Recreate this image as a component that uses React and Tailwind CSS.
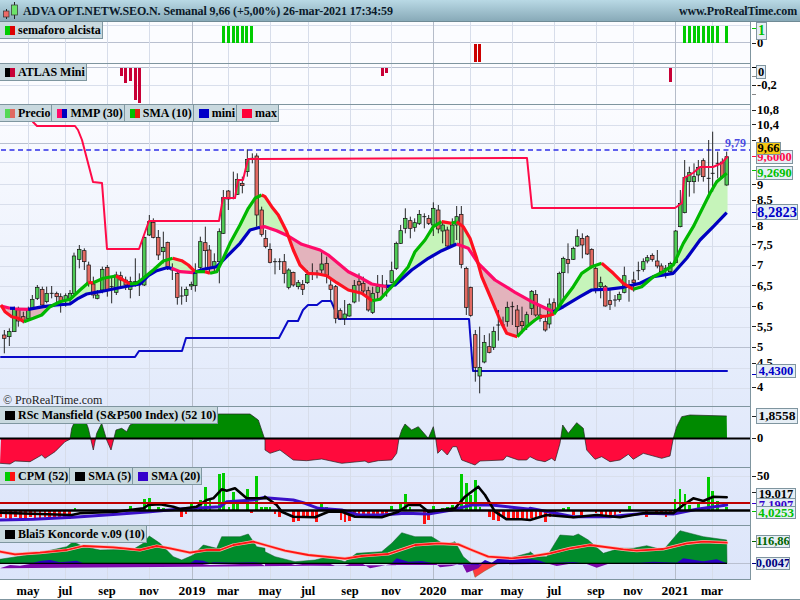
import React from "react";

const z = (ox, oy, pts) => pts.map(([x, y]) => [ox + x / 3, oy + y / 3]);
const str = (pts) => pts.map((p) => p[0].toFixed(1) + "," + p[1].toFixed(1)).join(" ");

const V = [28, 65, 107, 149, 192, 228, 270, 308, 350, 391, 433, 470, 512, 554, 596, 633, 675, 712];
const VD = [192, 433, 675];

const c3 = [[13,615,625,600,670,'r'],[28,604,620,595,648,'g'],[43,537,605,530,605,'g'],[55,535,573,530,590,'r'],[70,560,575,545,580,'r'],[85,540,565,530,570,'g'],[97,508,535,495,540,'g'],[112,472,505,465,510,'g'],[127,478,525,470,530,'r'],[140,490,515,470,520,'g'],[155,490,491,468,505,'g'],[170,490,500,485,520,'r'],[182,500,515,490,548,'r'],[197,497,510,490,530,'g'],[210,490,505,480,520,'g'],[222,378,490,368,495,'g'],[238,358,388,345,415,'g'],[253,362,395,355,420,'r'],[266,405,460,395,470,'r'],[280,462,495,440,505,'r'],[292,495,505,480,508,'g'],[307,418,480,410,490,'g'],[322,412,480,405,500,'r'],[335,470,471,440,520,'g'],[349,435,487,425,495,'g'],[362,437,450,425,470,'r'],[377,450,465,440,480,'r'],[391,455,478,440,505,'g'],[406,455,460,385,470,'g'],[418,455,456,430,498,'g'],[433,322,465,320,468,'g'],[448,275,315,255,318,'g'],[460,277,322,265,325,'r'],[475,322,375,300,390,'r'],[490,352,365,305,400,'g'],[503,337,410,335,420,'r'],[517,420,421,400,450,'g'],[532,430,502,420,524,'r'],[545,498,499,470,524,'g'],[559,478,496,470,516,'g'],[574,463,468,455,480,'g'],[586,430,467,400,485,'g'],[601,335,412,320,420,'g'],[616,338,362,290,420,'r'],[628,360,412,345,430,'r'],[643,395,410,370,425,'g'],[658,305,395,295,460,'g'],[670,203,310,180,312,'g'],[685,183,207,180,240,'r'],[700,205,206,125,208,'g'],[712,148,193,130,195,'g'],[727,160,167,140,190,'r'],[742,88,125,58,140,'g'],[757,85,86,70,100,'g'],[770,78,255,70,290,'r'],[785,240,313,230,320,'r'],[797,325,350,300,355,'r']];
const c4 = [[15,358,397,340,400,'r'],[30,395,396,385,433,'g'],[44,395,396,385,420,'g'],[58,395,430,372,460,'r'],[71,420,472,415,478,'g'],[85,427,465,425,470,'r'],[100,458,470,450,478,'g'],[113,463,478,450,495,'r'],[127,433,458,420,462,'g'],[142,430,431,400,450,'g'],[156,430,431,420,445,'r'],[170,402,420,365,430,'g'],[185,400,437,380,460,'r'],[197,465,478,450,510,'r'],[212,470,565,465,580,'r'],[226,542,565,535,570,'r'],[239,552,565,510,585,'g'],[253,524,558,520,560,'g'],[268,467,516,450,520,'g'],[282,455,465,430,515,'r'],[295,460,483,440,490,'r'],[310,482,540,470,545,'r'],[323,490,547,470,552,'g'],[338,470,487,435,510,'g'],[352,465,470,435,495,'g'],[365,465,470,450,500,'r'],[380,422,457,395,460,'g'],[394,340,415,335,420,'g'],[407,302,340,285,342,'g'],[421,265,295,235,310,'g'],[436,272,295,260,325,'r'],[449,278,292,265,305,'g'],[463,253,280,240,285,'g'],[478,260,261,250,295,'g'],[491,265,280,255,285,'r'],[505,235,285,217,318,'g'],[520,240,297,225,310,'r'],[533,285,303,275,340,'g'],[547,300,348,290,352,'r'],[562,285,345,265,350,'g'],[575,260,285,228,330,'g'],[589,253,403,228,415,'r'],[604,415,532,410,555,'r'],[617,472,556,470,560,'r'],[631,614,712,600,755,'r'],[644,712,738,590,790,'g'],[658,637,696,615,700,'g'],[673,650,667,610,670,'r'],[686,604,652,590,660,'g'],[700,585,586,540,632,'g'],[714,585,586,560,590,'r'],[727,532,574,515,590,'g'],[742,530,531,515,585,'g'],[757,540,590,525,615,'r'],[771,575,587,530,610,'r'],[785,554,590,545,600,'g'],[800,484,535,480,555,'g']];
const c5 = [[17,493,555,480,560,'r'],[30,555,565,530,575,'r'],[46,575,600,560,605,'r'],[58,522,582,505,595,'g'],[72,518,547,505,555,'r'],[88,430,530,425,535,'g'],[100,385,428,380,510,'g'],[114,388,400,340,430,'r'],[130,355,388,350,390,'g'],[142,320,348,298,350,'g'],[157,325,345,310,385,'r'],[172,320,372,315,375,'r'],[185,358,410,355,415,'r'],[197,415,475,410,490,'r'],[212,458,470,440,505,'g'],[226,470,528,465,530,'r'],[240,512,523,480,540,'r'],[255,510,511,495,530,'g'],[268,493,508,485,515,'g'],[283,437,487,410,490,'g'],[297,470,471,450,515,'g'],[311,450,458,425,485,'r'],[325,422,423,395,450,'g'],[340,395,418,385,425,'g'],[352,383,393,375,400,'g'],[367,376,388,370,395,'r'],[382,393,408,360,415,'r'],[394,408,425,400,440,'r'],[407,415,416,405,445,'g'],[421,400,425,395,430,'g'],[437,303,398,300,400,'g'],[451,220,290,180,292,'g'],[464,142,248,90,250,'g'],[478,128,155,110,200,'g'],[492,140,155,100,190,'g'],[505,112,135,90,155,'g'],[520,92,140,85,155,'r'],[536,145,146,30,205,'g'],[548,130,131,5,185,'g'],[563,100,101,65,145,'g'],[577,96,140,85,145,'r'],[590,80,165,65,167,'g']];
const candles = [...c3.map((c) => [0, ...c]), ...c4.map((c) => [265, ...c]), ...c5.map((c) => [530, ...c])].map(
  ([ox, x, bt, bb, wt, wb, k]) => ({ x: ox + x / 3, bt: 130 + bt / 3, bb: 130 + bb / 3, wt: 130 + wt / 3, wb: 130 + wb / 3, k })
);

const G = "#00b800", R = "#ff1020", B = "#0000c0", P = "#ff0a6a";
const sma = [
  [R, z(0,130,[[3,525],[15,545],[35,560],[55,565],[72,575]])],
  [G, z(0,130,[[72,575],[100,565],[125,555],[150,530],[180,515],[210,508],[240,480],[265,458]])],
  [R, z(0,130,[[265,458],[280,458]])],
  [G, z(0,130,[[280,458],[310,445],[348,438]])],
  [R, z(0,130,[[348,438],[370,450],[390,462]])],
  [G, z(0,130,[[390,462],[410,460],[430,445],[460,420],[490,393],[518,385]])],
  [R, z(0,130,[[518,385],[545,392],[565,405],[585,425]])],
  [G, z(0,130,[[585,425],[615,425]])],
  [R, z(0,130,[[615,425],[630,430]])],
  [G, z(0,130,[[630,430],[650,425],[665,395],[690,340],[720,285],[745,235],[765,205],[785,195]])],
  [R, [...z(0,130,[[785,195]]), ...z(265,130,[[0,200],[20,230],[40,255],[65,305],[85,360],[105,405],[130,430],[160,432],[185,437],[215,458],[250,480],[290,490],[322,512]])]],
  [G, z(265,130,[[322,512],[345,508],[380,470],[430,410],[450,365],[480,330],[505,290],[530,275]])],
  [R, z(265,130,[[530,275],[560,280]])],
  [G, z(265,130,[[560,280],[575,275]])],
  [R, z(265,130,[[575,275],[595,290],[615,325],[635,385],[650,440],[680,510],[705,570],[725,610],[757,620]])],
  [G, [...z(265,130,[[757,620],[785,590]]), ...z(530,130,[[15,570],[30,560]])]],
  [R, z(530,130,[[30,560],[50,558],[72,552]])],
  [G, z(530,130,[[72,552],[100,510],[130,470],[155,430],[185,410],[215,400]])],
  [R, z(530,130,[[215,400],[250,430],[280,460],[310,478]])],
  [G, z(530,130,[[310,478],[335,470],[370,440],[400,425],[430,405],[460,340],[490,290],[510,250],[540,190],[560,155],[590,130]])],
];
const mmp = [
  [P, z(0,130,[[3,528],[30,535]])],
  [B, z(0,130,[[30,535],[45,535]])],
  [P, z(0,130,[[45,537],[85,538]])],
  [B, z(0,130,[[85,538],[130,530],[170,525],[210,522],[235,505],[260,492],[300,485],[350,475],[390,467],[420,462],[445,437],[470,422],[500,413],[515,415]])],
  [P, z(0,130,[[515,415],[540,425],[580,428]])],
  [B, z(0,130,[[580,428],[610,418],[650,410],[680,380],[720,340],[750,300],[780,292]])],
  [P, [...z(0,130,[[780,292]]), ...z(265,130,[[0,290],[35,302],[70,318],[110,343],[165,360],[190,375],[250,425],[290,445],[320,462],[365,470]])]],
  [B, z(265,130,[[365,470],[390,465],[440,420],[490,385],[530,362],[575,342]])],
  [P, [...z(265,130,[[575,342],[610,355],[640,400],[690,450],[750,487]]), ...z(530,130,[[5,515],[70,545]])]],
  [B, z(530,130,[[70,545],[100,530],[150,500],[185,480],[220,478]])],
  [P, z(530,130,[[220,478],[232,478]])],
  [B, z(530,130,[[232,478],[280,472],[330,460],[370,440],[430,430],[470,385],[510,330],[550,290],[590,248]])],
];
const flat = (s) => s.flatMap((g) => g[1]);
const interp = (pts, x) => {
  if (x <= pts[0][0]) return pts[0][1];
  for (let i = 1; i < pts.length; i++) {
    if (x <= pts[i][0]) {
      const [a, b] = [pts[i - 1], pts[i]];
      if (b[0] === a[0]) return b[1];
      return a[1] + ((b[1] - a[1]) * (x - a[0])) / (b[0] - a[0]);
    }
  }
  return pts[pts.length - 1][1];
};
const smaF = flat(sma), mmpF = flat(mmp);
let fillG = "", fillR = "";
for (let x = 1; x <= 727; x += 1) {
  const a = interp(smaF, x), b = interp(mmpF, x);
  const d = `M${x} ${a.toFixed(1)}L${x} ${b.toFixed(1)}`;
  if (a < b) fillG += d; else fillR += d;
}

const maxLine = [[33,122],[37,126],[75,126],[78,130],[82,140],[93,182],[102,183],[107,249],[139,249],[149,221],[219,221],[223,198],[235,198],[238,180],[243,180],[248,159],[527,158],[532,208],[675,208],[682,203],[684,178],[693,173],[700,167],[713,167],[722,163],[727,157]];
const miniLine = [[1,357],[135,357],[139,351],[182,351],[186,338],[279,338],[288,321],[298,321],[303,310],[308,305],[317,305],[322,301],[331,301],[339,319],[469,319],[473,371],[727,371]];

const rsc = [
  ...z(0,400,[[0,190],[30,192],[45,183],[90,185],[125,165],[135,175],[165,155],[195,125],[210,118],[215,85],[235,40],[250,45],[265,85],[280,150],[290,100],[305,70],[320,120],[333,150],[348,90],[365,85],[380,95],[390,75],[420,60],[500,50],[600,45],[660,42],[750,42],[775,60],[795,120]]),
  ...z(265,400,[[0,150],[15,160],[45,150],[85,180],[125,182],[170,177],[230,190],[300,183],[310,188],[340,182],[380,180],[395,160],[402,115],[410,90],[420,72],[440,90],[460,80],[490,115],[505,80],[512,115],[518,160],[530,148],[547,165],[563,140],[575,140],[590,180],[630,195],[645,183],[715,180],[725,168],[760,180],[785,180]]),
  ...z(530,400,[[0,170],[20,180],[45,185],[65,175],[75,183],[90,130],[98,75],[115,100],[140,68],[160,85],[170,150],[195,178],[215,170],[240,185],[270,180],[295,163],[310,178],[340,160],[395,175],[420,168],[430,115],[440,80],[455,50],[480,45],[590,48]]),
];
const rscArea = `${str(rsc)} 727,438.5 1,438.5`;

const cpmBars = [
  ...Array.from({ length: 15 }, (_, i) => [0, 3 + i * 14.6, 352 + (i % 3) * 3]),
  ...[[225,325],[392,318],[433,297],[448,295],[475,320],[490,325],[545,350],[558,342],[575,312],[587,320],[602,300],[617,262],[630,300],[658,222],[670,220],[687,320],[700,275],[713,310],[742,267],[755,338],[770,228],[785,320],[800,322]].map((b) => [0, ...b]),
  ...[[0,322],[15,322],[30,342],[44,350],[85,365],[100,362],[115,350],[128,350],[142,350],[155,365],[170,312],[185,322],[228,360],[240,365],[253,362],[268,340],[282,345],[296,345],[310,345],[325,345],[338,345],[352,345],[365,345],[380,318],[407,310],[421,282],[435,320],[478,372],[490,360],[505,318],[532,325],[547,322],[562,315],[590,222],[604,248],[617,285],[631,240],[645,322],[673,350],[686,360],[700,362],[715,350],[730,355],[745,355],[758,355],[772,355],[786,357]].map((b) => [265, ...b]),
  ...[[5,355],[18,350],[32,350],[46,365],[60,350],[73,345],[100,323],[115,320],[130,345],[155,345],[198,340],[215,355],[228,355],[242,355],[255,350],[270,340],[298,318],[350,350],[380,340],[395,340],[408,352],[422,345],[435,297],[450,267],[465,283],[478,315],[505,310],[535,230],[547,272],[562,302],[590,320]].map((b) => [530, ...b]),
];
const sma5 = [
  ...z(0,400,[[0,338],[215,345],[240,340],[350,335],[430,325],[445,315],[480,313],[520,320],[540,327],[590,320],[620,300],[640,295],[665,268],[680,272],[705,265],[740,295],[795,295]]),
  ...z(265,400,[[0,290],[35,315],[50,335],[85,350],[150,352],[190,335],[230,335],[270,350],[350,352],[400,335],[430,315],[465,315],[490,335],[570,325],[600,290],[640,260],[660,285],[690,335],[725,358],[770,358],[795,360]]),
  ...z(530,400,[[0,360],[50,345],[130,352],[200,345],[270,352],[340,340],[430,340],[460,315],[490,295],[520,303],[550,290],[590,292]]),
];
const sma20 = [
  ...z(0,400,[[0,360],[100,358],[220,352],[350,343],[450,335],[540,327],[660,320],[680,305],[760,300],[795,292]]),
  ...z(265,400,[[0,293],[85,300],[120,310],[160,325],[230,330],[280,345],[350,345],[420,340],[490,342],[560,330],[620,315],[680,315],[740,322],[795,328]]),
  ...z(530,400,[[0,325],[70,338],[130,350],[240,350],[290,345],[350,340],[430,342],[500,328],[590,315]]),
];

const konG = [
  ...z(0,400,[[0,478],[50,470],[110,460],[200,440],[220,425],[250,440],[300,450],[400,448],[430,430],[448,408],[480,430],[520,470],[545,480],[580,465],[610,435],[650,445],[665,410],[720,410],[745,402],[770,440],[795,445]]),
  ...z(265,400,[[0,455],[30,470],[90,485],[150,480],[190,470],[240,485],[275,460],[350,455],[380,430],[410,398],[450,410],[500,410],[540,435],[570,425],[595,470],[618,490]]),
];
const konG2 = [
  ...z(265,400,[[700,490],[720,478],[795,458]]),
  ...z(530,400,[[0,455],[20,470],[50,470],[90,405],[130,408],[145,402],[175,420],[220,460],[270,445],[310,445],[350,437],[400,450],[450,392],[520,410],[590,420]]),
];
const konBlue = z(0,400,[[0,490],[100,488],[120,483],[150,480],[180,487],[230,482],[250,490],[570,490],[585,480],[610,482],[630,490],[640,487],[700,488],[760,487],[795,490]]);
const konBlue2 = [
  ...z(265,400,[[380,490],[395,475],[430,485],[470,483],[505,490],[640,495],[660,480],[680,488],[700,475],[760,472],[800,478]]),
  ...z(530,400,[[30,482],[50,490],[130,486],[160,490],[330,488],[370,485],[440,488],[460,475],[520,484],[560,478],[590,490]]),
];
const konPurple = [
  ...z(0,400,[[0,505],[30,495],[60,497],[90,492],[110,490],[590,490],[630,495],[780,490],[795,498]]),
  ...z(265,400,[[0,490],[70,490],[90,495],[130,490],[190,490],[210,497],[240,497],[260,490],[290,490],[315,505],[380,492],[510,490],[525,502],[560,498],[590,490],[605,518],[640,505],[655,490]]),
  ...z(530,400,[[50,490],[80,498],[130,490],[170,492],[200,503],[240,490]]),
];
const konRedArea = z(265,400,[[618,490],[630,532],[660,512],[700,490]]);
const konLine = [
  ...z(0,400,[[0,455],[45,463],[120,458],[200,450],[250,438],[340,442],[420,450],[470,438],[510,445],[570,458],[620,450],[660,450],[700,435],[760,425],[795,435]]),
  ...z(265,400,[[0,435],[60,452],[130,465],[180,470],[240,476],[290,468],[370,462],[450,435],[520,430],[580,433],[620,450],[670,470],[740,475],[795,470]]),
  ...z(530,400,[[0,470],[60,460],[120,445],[180,435],[280,448],[320,452],[400,447],[470,430],[520,425],[590,428]]),
];

const sem = [222, 227, 232, 236, 241, 245, 250, 683, 688, 693, 697, 702, 707, 711, 716, 725];

const Grid = ({ top, h, lines = [], dark = [] }) => (
  <g shapeRendering="crispEdges">
    {lines.map((y) => <line key={y} x1="0" x2="751" y1={y} y2={y} stroke={dark.includes(y) ? "#b9c0d0" : "#d9dfec"} />)}
    {V.map((x) => <line key={x} x1={x} x2={x} y1={top} y2={top + h} stroke={VD.includes(x) ? "#b5bcc9" : "#d7ddea"} />)}
  </g>
);

const Chart = ({ top, h, cls, grid, dark, children, legend }) => (
  <div className={`relative border-t border-r border-[#7f959f] ${cls}`} style={{ height: h }}>
    <svg className="block w-[750px] h-full" viewBox={`0 ${top + 1} 750 ${h - 1}`}>
      <Grid top={top} h={h} lines={grid} dark={dark} />
      {children}
    </svg>
    {legend}
  </div>
);

const Sw = ({ a, b }) => (
  <span className="flex w-[10px] h-[9px] shrink-0">
    <span className="flex-1" style={{ background: a }} />
    <span className="flex-1" style={{ background: b }} />
  </span>
);
const Legend = ({ items }) => (
  <div className="absolute left-0 top-0 flex h-[17px]">
    {items.map(([t, a, b], i) => (
      <div key={i} className="flex items-center gap-[3px] h-full pl-[5px] pr-[1px] bg-[#c9d9df] border-r border-b border-[#7f97a0] font-['Liberation_Serif',serif] font-bold text-[12px] text-black whitespace-nowrap">
        <Sw a={a} b={b} />
        <span>{t}</span>
      </div>
    ))}
  </div>
);

/* A stretch of the price scale: ticks and numbers sit in rows, whose heights come from the prices' spacing. */
const Scale = ({ top, h, rows, children }) => {
  const edges = rows.map((r, i) => (i === 0 ? r[0] - (rows.length > 1 ? Math.min(rows[1][0] - r[0], 2 * (r[0] - top)) / 2 : 0) : (rows[i - 1][0] + r[0]) / 2));
  return (
    <div className="relative shrink-0" style={{ height: h, paddingTop: edges[0] - top }}>
      {rows.map(([y, t, c], i) => {
        const next = i + 1 < rows.length ? edges[i + 1] : y + (y - edges[i]);
        return (
          <div key={y} className="flex items-center gap-px pl-px font-['Liberation_Serif',serif] font-bold text-[12.5px] leading-none text-black" style={{ height: next - edges[i] }}>
            <span className="w-[4px] h-px shrink-0" style={{ background: c || "#222" }} />
            <span>{t}</span>
          </div>
        );
      })}
      {children}
    </div>
  );
};
const Box = ({ y, h = 14, w, t, c, size = 12.5, bg = "#e6eef5" }) => (
  <div
    className="absolute left-[5px] flex items-center justify-center border border-[#7f959f] font-['Liberation_Serif',serif] font-bold leading-none overflow-hidden"
    style={{ top: y, height: h, width: w, color: c, fontSize: size, background: bg }}
  >{t}</div>
);

const months = [[28,"may"],[65,"jul"],[107,"sep"],[149,"nov"],[192,"2019"],[228,"mar"],[270,"may"],[308,"jul"],[350,"sep"],[391,"nov"],[433,"2020"],[472,"mar"],[512,"may"],[554,"jul"],[596,"sep"],[633,"nov"],[675,"2021"],[712,"mar"]];

const A = (p) => <polyline fill="none" strokeLinejoin="round" strokeLinecap="round" {...p} />;

export default function App() {
  return (
    <div className="w-[800px] h-[600px] flex flex-col bg-white overflow-hidden border-b border-[#7f959f]">
      <div className="h-[22px] shrink-0 flex items-center justify-between pr-[3px] bg-gradient-to-b from-[#b9d9e5] to-[#88aab8] border-b border-[#6f8a95] font-['Liberation_Serif',serif] font-bold text-[#0b1a2a] text-[12px] whitespace-nowrap">
        <div className="flex items-center">
          <svg viewBox="0 0 18 18" className="w-[18px] h-[18px] ml-[2px]">
            <path d="M4.500 7v10M12.500 0v17" stroke="#222" strokeWidth="1" />
            <rect x="1.500" y="9" width="5.500" height="6" fill="#ec6a66" stroke="#333" strokeWidth="0.7" />
            <rect x="9.500" y="3" width="6" height="10" fill="#6de36a" stroke="#333" strokeWidth="0.7" />
          </svg>
          <span className="ml-[3px] tracking-[-0.1px]">ADVA OPT.NETW.SEO.N. Semanal 9,66 (+5,00%) 26-mar-2021 17:34:59</span>
        </div>
        <span className="tracking-[-0.15px]">www.ProRealTime.com</span>
      </div>

      <div className="flex flex-1 min-h-0">
        <div className="w-[751px] shrink-0 flex flex-col">
          <Chart top={22} h={41} cls="!border-t-0 bg-[#fbfcff]" grid={[26, 43]} dark={[43]}
            legend={<Legend items={[["semaforo alcista", "#00cc00", "#dd0000"]]} />}>
            <g shapeRendering="crispEdges">
              {sem.map((x) => <rect key={x} x={x} y="26" width="3" height="17" fill="#00cc00" />)}
              <rect x="474" y="44" width="3" height="18" fill="#cc0000" />
              <rect x="478" y="44" width="3" height="18" fill="#cc0000" />
            </g>
          </Chart>

          <Chart top={63} h={41} cls="bg-[#fbfcff]" grid={[67, 85]} dark={[67]}
            legend={<Legend items={[["ATLAS Mini", "#000000", "#c80036"]]} />}>
            <g shapeRendering="crispEdges" fill="#c80036">
              <rect x="120" y="68" width="3" height="8" />
              <rect x="124" y="68" width="3" height="15" />
              <rect x="129" y="68" width="3" height="13" />
              <rect x="134" y="68" width="3" height="32" />
              <rect x="138" y="68" width="3" height="35" />
              <rect x="381" y="68" width="3" height="8" />
              <rect x="385" y="68" width="3" height="5" />
              <rect x="669" y="68" width="3" height="14" />
            </g>
          </Chart>

          <Chart top={104} h={302} cls="bg-gradient-to-b from-[#fbfcff] to-[#e2eafb]"
            grid={[109, 125, 143, 162, 184, 204, 224, 246, 266, 286, 307, 327, 347, 368, 388]} dark={[143, 347]}
            legend={
              <>
                <Legend items={[["Precio", "#55d855", "#e06a60"], ["MMP (30)", "#ff0a6a", "#0000c0"], ["SMA (10)", "#00c000", "#e02010"], ["mini", "#0000c8", "#0000c8"], ["max", "#ff0038", "#ff0038"]]} />
                <div className="absolute left-[3px] top-[289px] font-['Liberation_Serif',serif] text-[12px] leading-none text-[#222]">© ProRealTime.com</div>
                <div className="absolute left-[725px] top-[32px] font-['Liberation_Serif',serif] font-bold text-[12px] leading-none text-[#4a4ae0]">9,79</div>
              </>
            }>
            <path d={fillG} stroke="#c6f4ba" strokeWidth="1.1" fill="none" />
            <path d={fillR} stroke="#e3b3bc" strokeWidth="1.1" fill="none" />
            <line x1="1" x2="750" y1="150" y2="150" stroke="#2f2fe8" strokeWidth="1.700" strokeDasharray="5 3.500" />
            <A points={str(miniLine)} stroke="#0a0ac8" strokeWidth="2" />
            {candles.map((c, i) => (
              <g key={i}>
                <line x1={c.x} x2={c.x} y1={c.wt} y2={c.wb} stroke="#111" strokeWidth="0.9" />
                {c.bb - c.bt < 1.5
                  ? <line x1={c.x - 2} x2={c.x + 2} y1={c.bt} y2={c.bt} stroke="#111" strokeWidth="0.9" />
                  : <rect x={c.x - 1.7} y={c.bt} width="3.4" height={c.bb - c.bt} fill={c.k === "g" ? "#4fca55" : "#e26a62"} stroke="#111" strokeWidth="0.7" />}
              </g>
            ))}
            <A points={str(maxLine)} stroke="#ff0a48" strokeWidth="2" />
            {mmp.map(([c, p], i) => <A key={i} points={str(p)} stroke={c} strokeWidth="3.200" strokeLinecap="butt" />)}
            {sma.map(([c, p], i) => <A key={i} points={str(p)} stroke={c} strokeWidth="3.200" strokeLinecap="butt" />)}
          </Chart>

          <Chart top={406} h={61} cls="bg-gradient-to-b from-[#e4ebfb] to-[#dee7fb]" grid={[438]} dark={[438]}
            legend={<Legend items={[["RSc Mansfield (S&P500 Index) (52 10)", "#000000", "#000000"]]} />}>
            <defs>
              <clipPath id="up"><rect x="0" y="400" width="751" height="38.500" /></clipPath>
              <clipPath id="dn"><rect x="0" y="438.500" width="751" height="40" /></clipPath>
            </defs>
            <polygon points={rscArea} fill="#008a00" clipPath="url(#up)" />
            <polygon points={rscArea} fill="#ff0a3c" clipPath="url(#dn)" />
            <polyline points={str(rsc)} fill="none" stroke="#222" strokeWidth="0.7" />
            <line x1="0" x2="750" y1="438.500" y2="438.500" stroke="#000" strokeWidth="2" />
          </Chart>

          <Chart top={467} h={58} cls="bg-gradient-to-b from-[#e2e9fb] to-[#dce5fa]" grid={[476, 503, 510]}
            legend={<Legend items={[["CPM (52)", "#00cc00", "#ff1010"], ["SMA (5)", "#000000", "#000000"], ["SMA (20)", "#3300cc", "#3300cc"]]} />}>
            <g shapeRendering="crispEdges">
              {cpmBars.map(([ox, x, y], i) => {
                const px = ox + x / 3, py = 400 + y / 3;
                const up = py < 510;
                return <rect key={i} x={px - 1.3} y={up ? py : 510} width="2.7" height={Math.abs(py - 510)} fill={up ? "#00cc00" : "#ff1010"} />;
              })}
            </g>
            <A points={str(sma20)} stroke="#3a10c8" strokeWidth="3" />
            <A points={str(sma5)} stroke="#000" strokeWidth="2.600" />
            <line x1="0" x2="750" y1="503" y2="503" stroke="#c00000" strokeWidth="2" />
            <line x1="0" x2="750" y1="510.500" y2="510.500" stroke="#000" strokeWidth="2.400" />
          </Chart>

          <Chart top={525} h={54} cls="bg-gradient-to-b from-[#e0e8fb] to-[#dce5fa]" grid={[563]} dark={[563]}
            legend={<Legend items={[["Blai5 Koncorde v.09 (10)", "#000000", "#000000"]]} />}>
            <polygon points={`${str(konG)} ${konG[konG.length - 1][0]},563.300 0,563.300`} fill="#008c2c" stroke="#0a5a20" strokeWidth="0.5" />
            <polygon points={`${str(konG2)} 727,563.300 ${konG2[0][0]},563.300`} fill="#008c2c" stroke="#0a5a20" strokeWidth="0.5" />
            <polygon points={str(konRedArea)} fill="#ff3c3c" stroke="#8a5a20" strokeWidth="0.5" />
            <polygon points={str(konPurple)} fill="#7a08a8" />
            <polygon points={`${str(konBlue)} 0,563.300`} fill="#2a00c0" />
            <polygon points={`${str(konBlue2)} 727,563.300`} fill="#2a00c0" />
            <line x1="0" x2="727" y1="563.300" y2="563.300" stroke="#000" strokeWidth="1.200" />
            <A points={str(konLine)} stroke="#ffb0a8" strokeWidth="3.200" />
            <A points={str(konLine)} stroke="#ff1414" strokeWidth="1.800" />
          </Chart>

          <div className="flex flex-1 items-center pl-[28px] border-t border-[#7f959f] font-['Liberation_Serif',serif] font-bold text-black leading-none">
            {months.map(([x, t], i) => {
              const yr = /^\d/.test(t);
              const w = i + 1 < months.length ? months[i + 1][0] - x : 39;
              return (
                <div key={t + x} className="shrink-0" style={{ width: w }}>
                  <span className={`inline-block -translate-x-1/2 ${yr ? "text-[13.5px]" : "text-[12.5px]"}`}>{t}</span>
                </div>
              );
            })}
          </div>
        </div>

        <div className="flex-1 flex flex-col bg-white">
          <Scale top={22} h={41} rows={[[26, "", "#00cc00"], [43, "0"]]}>
            <Box y={0} h={18} w={11} t="1" c="#00c000" size={14} />
          </Scale>
          <Scale top={63} h={41} rows={[[67, "", "#000"], [76, "", "#888"], [85, "-0,2"], [94, "", "#888"]]}>
            <Box y={2} w={10} t="0" c="#000" />
          </Scale>
          <Scale top={104} h={302} rows={[[110,"10,8"],[124,"10,4"],[141,"10"],[157,"","#ff0a48"],[172,"","#00c000"],[182,"9"],[203,"8,5"],[212,"","#0000c0"],[224,"8"],[245,"7,5"],[265,"7"],[286,"6,5"],[306,"6"],[327,"5,5"],[347,"5"],[367,"4,5"],[371,"","#0000c0"],[387,"4"]]}>
            <Box y={46} w={37} t="9,6000" c="#ff0a48" />
            <Box y={38} h={13} w={25} t="9,66" c="#000" bg="#f6c814" />
            <Box y={62} w={37} t="9,2690" c="#00c000" />
            <Box y={100} h={16} w={42} t="8,2823" c="#0000c8" size={14.5} />
            <Box y={260} w={40} t="4,4300" c="#0000c8" />
          </Scale>
          <Scale top={406} h={61} rows={[[416, ""], [438, "0"]]}>
            <Box y={2} h={16} w={42} t="1,8558" c="#000" size={13.5} />
          </Scale>
          <Scale top={467} h={58} rows={[[476, "50"], [494, ""], [505, "", "#3300cc"], [511, "", "#00c000"]]}>
            <Box y={21} h={13} w={40} t="19,017" c="#000" />
            <Box y={31} h={14} w={40} t="7,1907" c="#3300cc" />
            <Box y={39} h={13} w={40} t="4,0253" c="#00c000" size={13} />
          </Scale>
          <Scale top={525} h={54} rows={[[541, "", "#006600"], [563, "", "#000080"]]}>
            <Box y={10} h={13} w={34} t="116,86" c="#006600" />
            <Box y={32} h={13} w={34} t="0,0047" c="#000080" />
          </Scale>
        </div>
      </div>
    </div>
  );
}
